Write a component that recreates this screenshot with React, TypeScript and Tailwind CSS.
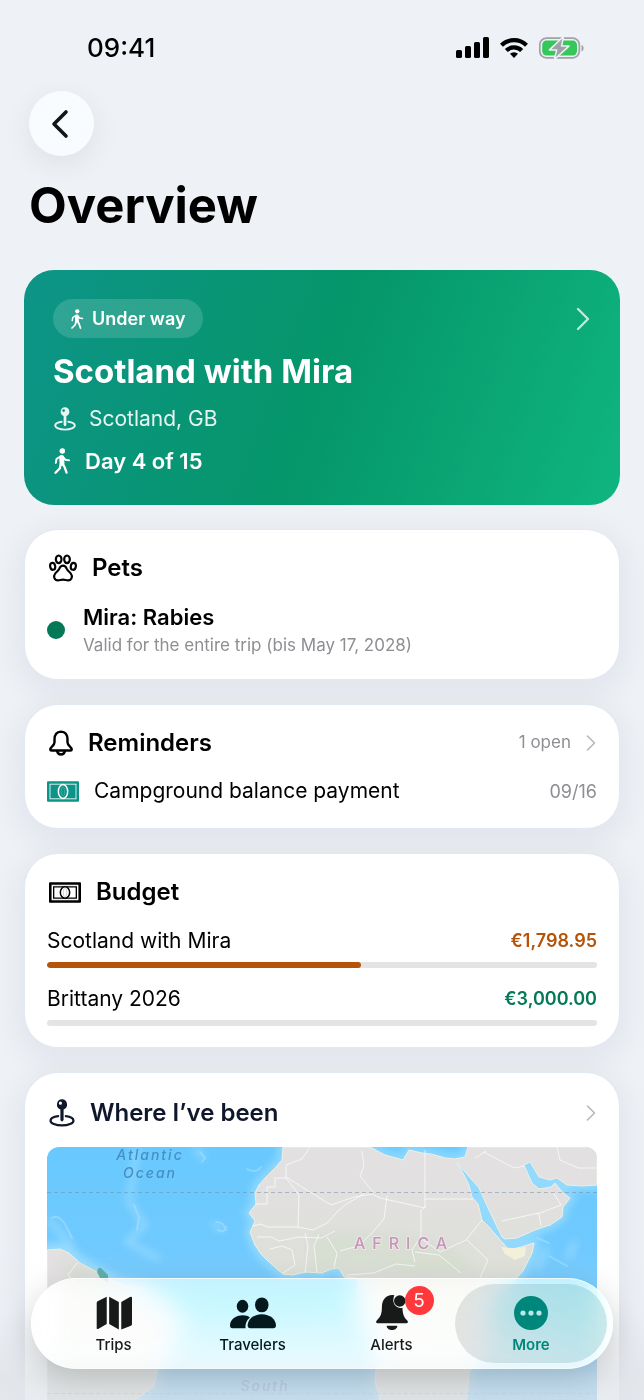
import type { ReactNode } from "react";
import { ChevronLeft, ChevronRight } from "lucide-react";

type IconProps = { className?: string };

const budgets = [
  { name: "Scotland with Mira", amount: "€1,798.95", percent: 57, tone: "text-[#b45309]" },
  { name: "Brittany 2026", amount: "€3,000.00", percent: 0, tone: "text-[#047857]" },
];

function SignalIcon({ className }: IconProps) {
  return (
    <svg className={className} viewBox="0 0 33 21" fill="currentColor" aria-hidden="true">
      <rect x="0" y="13" width="6" height="8" rx="1.6" />
      <rect x="9" y="9" width="6" height="12" rx="1.6" />
      <rect x="18" y="5" width="6" height="16" rx="1.6" />
      <rect x="27" y="0" width="6" height="21" rx="1.6" />
    </svg>
  );
}

function WifiIcon({ className }: IconProps) {
  return (
    <svg className={className} viewBox="0 0 28 20" fill="none" stroke="currentColor" strokeWidth="4.2" aria-hidden="true">
      <path d="M1.5 7.2a18 18 0 0 1 25 0" />
      <path d="M6.3 12.6a11 11 0 0 1 15.4 0" />
      <path d="M14 20l-4-4.2a5.8 5.8 0 0 1 8 0z" fill="currentColor" stroke="none" />
    </svg>
  );
}

function BatteryIcon({ className }: IconProps) {
  return (
    <svg className={className} viewBox="0 0 46 22" aria-hidden="true">
      <rect x="0.8" y="1.2" width="39.5" height="19.6" rx="6.5" fill="none" stroke="#9fa2a7" strokeWidth="1.7" />
      <path d="M42.5 8v6.4c2.8-.9 2.8-5.5 0-6.4z" fill="#9fa2a7" />
      <rect x="3.2" y="3.6" width="34.8" height="14.8" rx="4.3" fill="#34c759" />
      <path
        d="M24.5-.5 10.5 12.9h7.2L15.3 22.5 30 9.1h-7.4z"
        fill="#9fa2a7"
        stroke="#eef1f6"
        strokeLinejoin="round"
        strokeWidth="1.5"
      />
    </svg>
  );
}

function WalkIcon({ className }: IconProps) {
  return (
    <svg
      className={className}
      viewBox="0 0 50 80"
      fill="none"
      stroke="currentColor"
      strokeLinecap="round"
      strokeLinejoin="round"
      aria-hidden="true"
    >
      <circle cx="26" cy="9" r="8.5" fill="currentColor" stroke="none" />
      <path d="M24 29l1 19" strokeWidth="15" />
      <path d="M28 27l7 9 12 2M20 26l-12 8-2 12" strokeWidth="6" />
      <path d="M27 48l6 11 6 17M21 50l-3 13L5 76" strokeWidth="7" />
    </svg>
  );
}

function PinIcon({ className }: IconProps) {
  return (
    <svg className={className} viewBox="0 0 80 88" fill="none" stroke="currentColor" aria-hidden="true">
      <path
        fillRule="evenodd"
        fill="currentColor"
        stroke="none"
        d="M40 1a16.5 16.5 0 0 1 5 32V66q-5 9-10 0V33A16.5 16.5 0 0 1 40 1zM35 8a5 5 0 1 0 0 10 5 5 0 0 0 0-10z"
      />
      <path d="M28 54C12 56 4 62 4 68c0 8 16 15 36 15s36-7 36-15c0-6-8-12-24-14" strokeWidth="7" strokeLinecap="round" />
    </svg>
  );
}

function PawIcon({ className }: IconProps) {
  return (
    <svg className={className} viewBox="0 0 84 82" fill="none" stroke="currentColor" strokeWidth="6.5" aria-hidden="true">
      <ellipse cx="29" cy="15" rx="8.5" ry="11.5" />
      <ellipse cx="54" cy="15" rx="8.5" ry="11.5" />
      <ellipse cx="11" cy="36" rx="7.5" ry="10.5" transform="rotate(-10 11 36)" />
      <ellipse cx="73" cy="36" rx="7.5" ry="10.5" transform="rotate(10 73 36)" />
      <path d="M42 34c-6 0-9 4-11 9-3 7-8 9-12 14-8 10-2 21 8 21 6 0 9-2 15-2s9 2 15 2c10 0 16-11 8-21-4-5-9-7-12-14-2-5-5-9-11-9z" />
    </svg>
  );
}

function BellIcon({ className }: IconProps) {
  return (
    <svg
      className={className}
      viewBox="0 0 74 80"
      fill="none"
      stroke="currentColor"
      strokeWidth="7.5"
      strokeLinejoin="round"
      aria-hidden="true"
    >
      <path d="M37 5c-13 1-20 11-20 24v9c0 10-13 14-13 22 0 2 1 3 4 3h58c3 0 4-1 4-3 0-8-13-12-13-22v-9C57 16 50 6 37 5z" />
      <path d="M25 64c2 15 22 15 24 0" />
    </svg>
  );
}

function BanknoteIcon({ className, filled = false }: IconProps & { filled?: boolean }) {
  const line = filled ? "#ffffff" : "currentColor";

  return (
    <svg className={className} viewBox="0 0 96 62" fill="none" aria-hidden="true">
      <rect width="96" height="62" rx="3" fill="currentColor" />
      <rect x="9" y="9" width="78" height="44" fill={filled ? "none" : "#ffffff"} stroke="#ffffff" strokeWidth="2.5" />
      {filled ? null : <path d="M14 14h68v34H14z" stroke={line} strokeWidth="4" />}
      <ellipse cx="48" cy="31" rx="14" ry={filled ? 21 : 17} fill={filled ? "currentColor" : "#ffffff"} stroke={line} strokeWidth="4.5" />
      <ellipse cx="48" cy="31" rx="5" ry="14" stroke={line} strokeWidth="1" opacity="0.5" />
    </svg>
  );
}

function TripsIcon({ className }: IconProps) {
  return (
    <svg className={className} viewBox="0 0 104 96" fill="currentColor" aria-hidden="true">
      <path d="M2 19q0-4 4-6L31 1v79L6 94q-4 2-4-3zM38 1l28 15v80L38 80zM73 16 98 2q6-3 6 3v74q0 4-3 6L73 96z" />
    </svg>
  );
}

function TravelersIcon({ className }: IconProps) {
  return (
    <svg className={className} viewBox="0 0 136 90" fill="currentColor" aria-hidden="true">
      <ellipse cx="37" cy="25" rx="17" ry="19" />
      <ellipse cx="94" cy="21" rx="20" ry="22" />
      <path d="M0 83c0-18 16-31 38-31 9 0 16 2 21 6-9 8-14 17-13 32H6q-6 0-6-7z" />
      <path d="M52 83c0-19 18-34 42-34s42 15 42 34q0 7-7 7H59q-7 0-7-7z" />
    </svg>
  );
}

function AlertsIcon({ className }: IconProps) {
  return (
    <svg className={className} viewBox="0 0 94 104" fill="currentColor" aria-hidden="true">
      <path d="M48 0C28 1 17 15 17 36c0 22-5 30-14 38-6 6-3 10 3 10h82c6 0 9-4 3-10-8-7-12-15-13-36C57 42 45 22 54 1z" />
      <circle cx="70" cy="18" r="17" />
      <path d="M31 91h32c-1 17-31 17-32 0z" />
    </svg>
  );
}

function MoreIcon({ className }: IconProps) {
  return (
    <svg className={className} viewBox="0 0 34 34" aria-hidden="true">
      <circle cx="17" cy="17" r="17" fill="currentColor" />
      <g fill="#b9e6e8">
        <circle cx="9" cy="17" r="2.6" />
        <circle cx="17" cy="17" r="2.6" />
        <circle cx="25" cy="17" r="2.6" />
      </g>
    </svg>
  );
}

function WorldMap() {
  return (
    <svg className="block w-full rounded-xl" viewBox="0 0 550 300" role="img" aria-label="Map of visited countries">
      <defs>
        <linearGradient id="sea" x2="0" y2="1">
          <stop offset="0" stopColor="#69c9ff" />
          <stop offset="1" stopColor="#7ccafc" />
        </linearGradient>
        <linearGradient id="ground" x2="0" y2="1">
          <stop offset="0.1" stopColor="#e2e0e1" />
          <stop offset="0.4" stopColor="#dddfd8" />
          <stop offset="1" stopColor="#dfe1d8" />
        </linearGradient>
        <filter id="soft" x="-20%" y="-20%" width="140%" height="140%">
          <feGaussianBlur stdDeviation="4" />
        </filter>
        <path
          id="land"
          d="M236 0 235 13 227 22 219 30 212 38 208 46 209 57 202 66 208 74 203 85 208 98 214 107 220 113 229 121 236 127 246 128 258 125 275 126 284 122 292 121 297 130 310 131 312 150 310 166 322 187 330 212 328 235 338 270 346 300 395 300 410 275 420 250 422 225 440 204 443 186 440 165 448 149 462 139 476 124 485 106 487 96 474 100 462 103 455 95 442 80 435 73 431 57 425 50 422 38 416 26 410 16 418 25 432 41 442 63 455 90 458 92 470 91 488 83 503 78 515 70 516 60 523 51 516 46 508 36 504 40 492 42 485 36 477 18 483 15 492 30 503 33 510 31 520 38 535 39 550 38V0H421L418 10 408 12 398 11 384 7 375 6 362 3 356 13 338 8 323 0z"
        />
        <path id="south-america" d="M0 103 13 102 22 106 33 116 50 125 60 131 74 137 96 141 114 152 134 172 128 189 122 206 111 219 107 239 88 253 73 280 60 300H0z" />
      </defs>
      <rect width="550" height="300" fill="url(#sea)" />
      <g fill="none" stroke="#a9e3ff" filter="url(#soft)" opacity="0.7">
        <use href="#land" strokeWidth="9" />
        <use href="#south-america" strokeWidth="13" />
        <path d="M90 0 82 55 98 78 80 95 113 112M148 0l8 12M0 72l15 15 12 16M165 76l12 8M500 100l-10 24M528 94l-7 18" strokeWidth="5" />
      </g>
      <g fill="none" stroke="#ace2ff" strokeLinecap="round" strokeWidth="2" opacity="0.5">
        <path d="M169 75q8 0 10 8m-8 0q6 4 8-3M200 22q9 5 14-2M153 5l5 6-3 4M87 58l5 12-2 13M502 109l18 10M490 91l12 5M5 71q6-4 13 6l7 14" />
      </g>
      <g fill="url(#ground)" stroke="#eef0df" strokeWidth="1">
        <use href="#land" />
        <use href="#south-america" />
      </g>
      <g fill="#cbdcc4" filter="url(#soft)" opacity="0.35">
        <path d="M265 88l40-4 60 6 40 12 20 20-50 6-60-10-50 5zM10 112l30 8 30 20-35 5z" />
      </g>
      <path d="M454 100q14 2 25 0l-1 9-10 4-10-6z" fill="#f2f0d8" />
      <path d="M50 125q1-5 4-4l7 7v7l-8-4z" fill="#56ada4" />
      <g fill="none" stroke="#ffffff" strokeLinejoin="round" strokeWidth="1" opacity="0.7">
        <path d="M208 57h12V40h8V31h11V18l16-6 8-12M239 30l45 28 23-8 18-3 8 4 45 10V3M239 31l13 17-1 32h-30l-8-3-7 2M251 80l15 3 14-7 9-10 9-8 20-12M315 4l2 15-4 10 14 17M340 49l-3 23-12 14M378 52h48M378 60l-4 3v26l-9 14 3 12M280 90l10 16-3 14M272 87l-5 12 3 26M258 86l3 13-3 27M223 102l12-3 10 4 3 15-12 8M210 90h14l8 4 20-4 22 1 14-7M325 86l-14 13-18 5M368 105l24 3 22 18M375 92l18 13 26-12 16-20M300 128l27-2 22-9 19 2M428 11l11-7M437 5l30 16 10-2M490 67l24-9-8-13M492 67l2 12M455 74l37-8M510 0l3 13 18 8h19M420 93l21 20-12 27M30 116l-9 12 14 15M331 150l25 15 16 40 28-3 20 24" />
      </g>
      <path d="M0 45.5h550M0 246.5h550" stroke="#718a9a" strokeOpacity="0.5" strokeDasharray="4 3" />
      <g fontFamily="Inter, sans-serif" textAnchor="middle">
        <g fill="#458fc2" fontSize="14" fontStyle="italic" fontWeight="500" letterSpacing="2">
          <text x="103" y="13">Atlantic</text>
          <text x="103" y="31">Ocean</text>
          <text x="218" y="244">South</text>
        </g>
        <text x="357" y="102" fill="#c497b5" stroke="#eee5ea" strokeWidth="2" paintOrder="stroke" fontSize="16" fontWeight="500" letterSpacing="7">
          AFRICA
        </text>
      </g>
    </svg>
  );
}

function Card({ children }: { children: ReactNode }) {
  return (
    <section className="rounded-[34px] border border-[#e2e9f4] bg-white px-[22px] pb-[21px] pt-5 shadow-[0_8px_30px_8px_rgba(15,23,42,0.05)]">
      {children}
    </section>
  );
}

function CardTitle({ icon, children }: { icon: ReactNode; children: ReactNode }) {
  return (
    <h2 className="flex items-center gap-[15px] pl-0.5 text-[24px] font-semibold leading-9">
      {icon}
      {children}
    </h2>
  );
}

export default function App() {
  return (
    <div className="relative flex h-screen flex-col overflow-hidden bg-[#eef1f6] font-['Inter',sans-serif] text-black">
      <div className="flex h-[91px] shrink-0 items-center justify-between pb-1 pl-[87px] pr-[59px] pt-2">
        <span className="text-[26px] font-medium leading-8">09:41</span>
        <div className="flex items-center gap-[11px]">
          <SignalIcon className="h-[21px] w-[33px]" />
          <WifiIcon className="h-5 w-7" />
          <BatteryIcon className="h-[22px] w-[46px]" />
        </div>
      </div>

      <header className="shrink-0 px-[29px]">
        <button
          type="button"
          aria-label="Back"
          className="flex size-[65px] items-center justify-center rounded-full bg-[#f9fcff] shadow-[0_8px_30px_rgba(0,0,0,0.07)]"
        >
          <ChevronLeft className="-ml-1 size-12 text-[#141416]" strokeWidth={1.8} />
        </button>
        <h1 className="mt-5 text-[49px] font-bold leading-[60px]">Overview</h1>
      </header>

      <main className="mt-[34px] flex flex-1 flex-col gap-6 px-6">
        <a href="#trip" className="block rounded-[30px] bg-[linear-gradient(110deg,#0d9488_0%,#059669_50%,#10b981_106%)] p-[29px] text-white">
          <div className="flex items-center justify-between">
            <span className="flex items-center gap-2 rounded-full bg-white/15 px-[17px] py-[5px] text-[18px] font-semibold leading-[29px]">
              <WalkIcon className="h-5 w-3.5" />
              Under way
            </span>
            <ChevronRight className="-my-1 -mr-3 size-10 opacity-75" strokeWidth={1.4} />
          </div>
          <h2 className="mt-3 text-[33px] font-bold leading-[42px]">Scotland with Mira</h2>
          <p className="mt-3 flex items-center gap-3 text-[21px] leading-[30px] text-white/90">
            <PinIcon className="h-6 w-6" />
            Scotland, GB
          </p>
          <p className="mt-3 flex items-center gap-3.5 text-[22px] font-semibold leading-[30px]">
            <WalkIcon className="h-[26px] w-[18px]" />
            Day 4 of 15
          </p>
        </a>

        <Card>
          <CardTitle icon={<PawIcon className="h-7 w-7" />}>Pets</CardTitle>
          <div className="mt-4 flex items-center gap-[18px]">
            <span className="size-[18px] rounded-full bg-[#047857]" />
            <div>
              <p className="text-[22px] font-semibold leading-[30px]">Mira: Rabies</p>
              <p className="text-[17px] leading-[26px] text-[#8e8e93]">Valid for the entire trip (bis May 17, 2028)</p>
            </div>
          </div>
        </Card>

        <Card>
          <div className="flex items-center justify-between">
            <CardTitle icon={<BellIcon className="h-[26px] w-6" />}>Reminders</CardTitle>
            <a href="#reminders" className="flex items-center gap-1.5 text-[17px] text-[#8e8e93]">
              1 open
              <ChevronRight className="-mr-2 size-7 text-[#b8b8bc]" strokeWidth={1.4} />
            </a>
          </div>
          <div className="mt-3.5 flex items-center gap-[15px]">
            <BanknoteIcon filled className="h-[21px] w-8 text-[#0d9488]" />
            <span className="flex-1 text-[21px] leading-8">Campground balance payment</span>
            <time className="text-[18px] text-[#8e8e93]">09/16</time>
          </div>
        </Card>

        <Card>
          <CardTitle icon={<BanknoteIcon className="h-[21px] w-8" />}>Budget</CardTitle>
          {budgets.map((budget) => (
            <div className="mt-4" key={budget.name}>
              <div className="flex items-center justify-between leading-[30px]">
                <span className="text-[21px]">{budget.name}</span>
                <span className={`text-[18px] font-semibold ${budget.tone}`}>{budget.amount}</span>
              </div>
              <div className="mt-1.5 h-1.5 overflow-hidden rounded-full bg-[#e4e4e4]">
                <div className="h-full rounded-full bg-[#b45309]" style={{ width: `${budget.percent}%` }} />
              </div>
            </div>
          ))}
        </Card>

        <Card>
          <a href="#visited" className="mb-4 flex items-center justify-between pt-0.5 text-[#0f172a]">
            <CardTitle icon={<PinIcon className="h-7 w-[26px]" />}>Where I’ve been</CardTitle>
            <ChevronRight className="-mr-2 size-7 text-[#b8b8bc]" strokeWidth={1.4} />
          </a>
          <WorldMap />
        </Card>
      </main>

      <div className="pointer-events-none absolute inset-x-0 bottom-0 h-[150px] bg-[linear-gradient(to_bottom,transparent_0%,rgba(226,230,236,0.15)_40%,rgba(222,226,231,0.7)_85%,rgba(225,229,234,0.75)_100%)]" />

      <nav className="absolute inset-x-[31px] bottom-[31px] flex h-[91px] items-stretch rounded-full border border-white/60 bg-linear-to-b from-white/60 to-white/70 py-[5px] pl-3 pr-[5px] shadow-[0_10px_30px_rgba(0,0,0,0.16)] backdrop-blur-md backdrop-brightness-110 backdrop-saturate-150">
        <a href="#trips" className="flex flex-1 flex-col items-center justify-end pb-2 text-[15px] font-medium leading-5 text-[#171a19]">
          <TripsIcon className="mb-[5px] h-[34px] w-9" />
          Trips
        </a>
        <a href="#travelers" className="flex flex-1 flex-col items-center justify-end pb-2 text-[15px] font-medium leading-5 text-[#04191e]">
          <TravelersIcon className="mb-[5px] h-[34px] w-[46px]" />
          Travelers
        </a>
        <a href="#alerts" className="flex flex-1 flex-col items-center justify-end pb-2 text-[15px] font-medium leading-5 text-[#171a19]">
          <span className="relative mb-[5px]">
            <AlertsIcon className="h-[35px] w-8" />
            <span className="absolute -right-[26px] -top-[9px] flex size-[29px] items-center justify-center rounded-full bg-[#ff383c] text-[19px] font-normal text-white">
              5
            </span>
          </span>
          Alerts
        </a>
        <a
          href="#more"
          aria-current="page"
          className="-ml-1.5 flex w-[152px] flex-col items-center justify-end rounded-full bg-linear-to-r from-[#808080]/20 to-[#3fa3b0]/25 pb-2 text-[15px] font-semibold leading-5 text-[#00877b]"
        >
          <MoreIcon className="mb-[5px] size-[34px]" />
          More
        </a>
      </nav>
    </div>
  );
}
